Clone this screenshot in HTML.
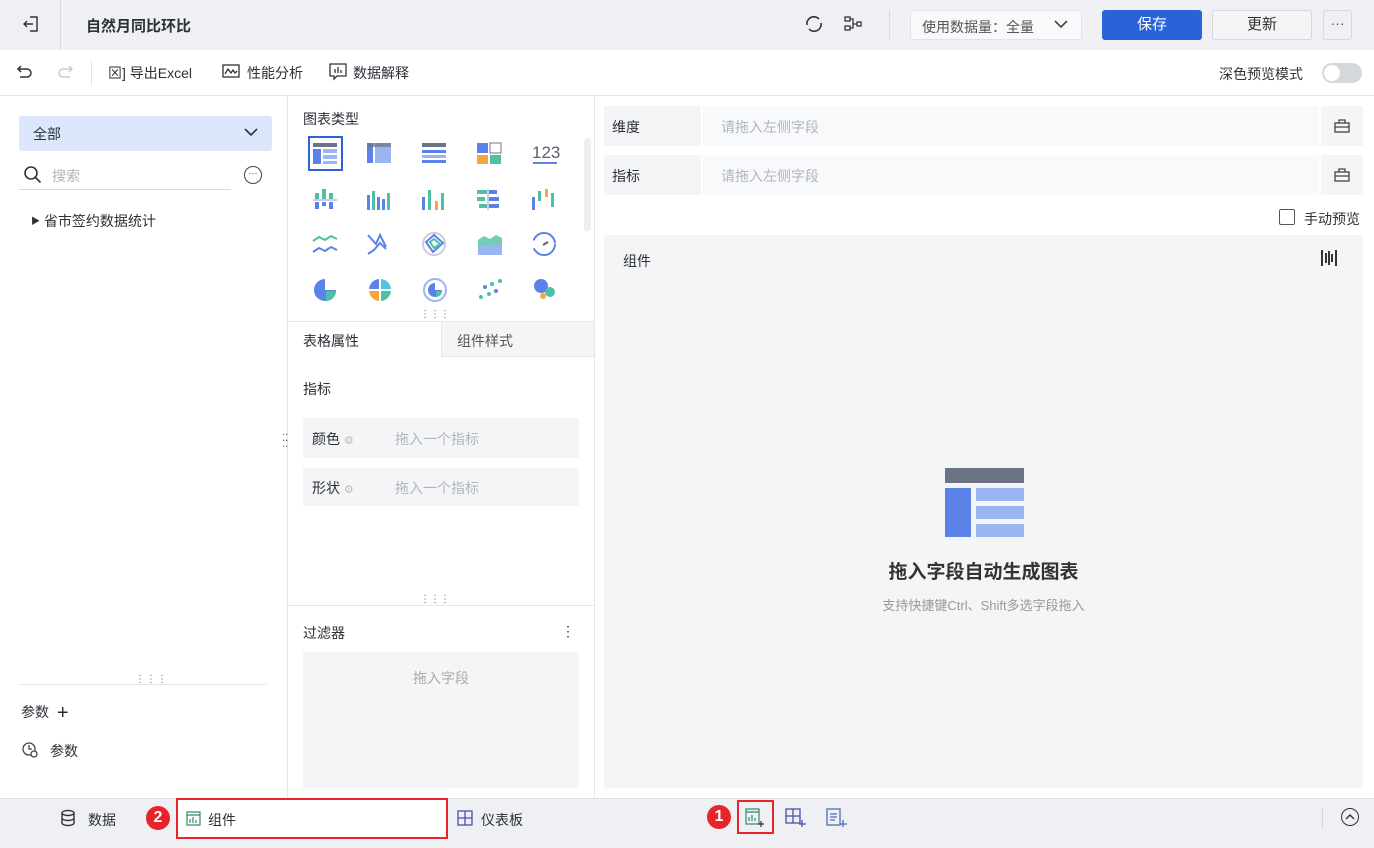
<!DOCTYPE html>
<html><head><meta charset="utf-8"><style>
*{box-sizing:border-box;margin:0;padding:0}
body{width:1374px;height:848px;overflow:hidden;font-family:"Liberation Sans","Noto Sans CJK SC",sans-serif;color:#2b2f36;background:#fff;position:relative;font-size:14px}
.a{position:absolute}
.g{color:#b0b5bd}
</style></head><body>
<div class="a" style="left:0;top:0;width:1374px;height:50px;background:#eef0f4"></div>
<div class="a" style="left:60px;top:0;width:1px;height:50px;background:#d8dbe0"></div>
<svg class="a" style="left:22px;top:14px" width="18" height="20" viewBox="0 0 18 20" fill="none" stroke="#333" stroke-width="1.4"><path d="M8 3h7v14H8M2 10h9M5 7l-3 3 3 3"/></svg>
<div class="a" style="left:86px;top:15px;font-size:15px;font-weight:bold">自然月同比环比</div>
<svg class="a" style="left:804px;top:14px" width="20" height="20" viewBox="0 0 20 20" fill="none" stroke="#333" stroke-width="1.6"><path d="M4 6a7 7 0 0 1 11-1M16 14a7 7 0 0 1-11 1M3 11a7 7 0 0 1 1-5M17 9a7 7 0 0 1-1 5"/></svg>
<svg class="a" style="left:843px;top:15px" width="20" height="18" viewBox="0 0 20 18" fill="none" stroke="#333" stroke-width="1.3"><rect x="2" y="2" width="5" height="4"/><rect x="2" y="11" width="5" height="4"/><rect x="14" y="7" width="4" height="4"/><path d="M7 4h3v9H7M10 9h4"/></svg>
<div class="a" style="left:889px;top:10px;width:1px;height:30px;background:#d8dbe0"></div>
<div class="a" style="left:910px;top:10px;width:172px;height:30px;background:#f8f9fb;border:1px solid #dfe2e6;border-radius:3px;font-size:14px;color:#555;padding:6px 0 0 11px">使用数据量：全量</div>
<svg class="a" style="left:1053px;top:18px" width="16" height="12" viewBox="0 0 16 12" fill="none" stroke="#444" stroke-width="1.6"><path d="M2 3l6 6 6-6"/></svg>
<div class="a" style="left:1102px;top:10px;width:100px;height:30px;background:#2962d9;border-radius:3px;color:#fff;text-align:center;line-height:30px;font-size:15px">保存</div>
<div class="a" style="left:1212px;top:10px;width:100px;height:30px;background:#f4f5f7;border:1px solid #d5d8dd;border-radius:3px;text-align:center;line-height:28px;font-size:15px;color:#333">更新</div>
<div class="a" style="left:1323px;top:10px;width:29px;height:30px;border:1px solid #d5d8dd;border-radius:3px;text-align:center;line-height:24px;color:#555">···</div>
<div class="a" style="left:0;top:95px;width:1374px;height:1px;background:#e4e6ea"></div>
<svg class="a" style="left:16px;top:64px" width="18" height="16" viewBox="0 0 18 16" fill="none" stroke="#333" stroke-width="1.5"><path d="M5 2L2 5l3 3M2 5h9a4 4 0 0 1 0 8H4"/></svg>
<svg class="a" style="left:56px;top:64px" width="18" height="16" viewBox="0 0 18 16" fill="none" stroke="#ccc" stroke-width="1.5"><path d="M13 2l3 3-3 3M16 5H7a4 4 0 0 0 0 8h7"/></svg>
<div class="a" style="left:91px;top:60px;width:1px;height:26px;background:#e4e6ea"></div>
<div class="a" style="left:108px;top:63px;font-size:14px">⊠] 导出Excel</div>
<svg class="a" style="left:222px;top:64px" width="18" height="16" viewBox="0 0 18 16" fill="none" stroke="#333" stroke-width="1.3"><rect x="1" y="1" width="16" height="12"/><path d="M3 10l3-5 3 4 2-3 2 3 2-2"/></svg>
<div class="a" style="left:247px;top:63px;font-size:14px">性能分析</div>
<svg class="a" style="left:329px;top:63px" width="18" height="18" viewBox="0 0 18 18" fill="none" stroke="#333" stroke-width="1.3"><path d="M1 1h16v12H8l-3 3v-3H1z"/><path d="M6 10V6M9 10V4M12 10V7"/></svg>
<div class="a" style="left:353px;top:63px;font-size:14px">数据解释</div>
<div class="a" style="left:1219px;top:64px;font-size:14px;color:#333">深色预览模式</div>
<div class="a" style="left:1322px;top:63px;width:40px;height:20px;border-radius:10px;background:#d4d7dc"><div style="margin:2px;width:16px;height:16px;border-radius:8px;background:#fff"></div></div>
<div class="a" style="left:287px;top:96px;width:1px;height:702px;background:#e4e6ea"></div>
<div class="a" style="left:19px;top:116px;width:253px;height:35px;background:#dde7fb;border-radius:3px;padding:8px 0 0 14px;font-size:14px">全部</div>
<svg class="a" style="left:243px;top:126px" width="16" height="12" viewBox="0 0 16 12" fill="none" stroke="#333" stroke-width="1.6"><path d="M2 3l6 6 6-6"/></svg>
<svg class="a" style="left:23px;top:165px" width="20" height="20" viewBox="0 0 20 20" fill="none" stroke="#333" stroke-width="1.6"><circle cx="8" cy="8" r="6"/><path d="M12.5 12.5l5 5"/></svg>
<div class="a g" style="left:52px;top:166px;font-size:14px">搜索</div>
<div class="a" style="left:19px;top:189px;width:212px;height:1px;background:#d8dbe0"></div>
<div class="a" style="left:244px;top:166px;width:18px;height:18px;border:1.4px solid #444;border-radius:50%;font-size:9px;text-align:center;line-height:12px">···</div>
<div class="a" style="left:31px;top:211px;font-size:14px"><span style="font-size:9px;vertical-align:2px">▶</span> 省市签约数据统计</div>
<div class="a" style="left:20px;top:684px;width:247px;height:1px;background:#e4e6ea"></div>
<div class="a" style="left:135px;top:674px;font-size:10px;color:#666;letter-spacing:1px">⋮⋮⋮</div>
<div class="a" style="left:21px;top:702px;font-size:14px">参数 <span style="font-size:20px;vertical-align:-2px;margin-left:4px">+</span></div>
<svg class="a" style="left:21px;top:741px" width="18" height="18" viewBox="0 0 18 18" fill="none" stroke="#444" stroke-width="1.3"><circle cx="8" cy="8" r="6"/><path d="M8 4v4h3"/><circle cx="13" cy="13" r="3" fill="#fff"/></svg>
<div class="a" style="left:50px;top:741px;font-size:14px">参数</div>
<div class="a" style="left:594px;top:96px;width:1px;height:702px;background:#e4e6ea"></div>
<div class="a" style="left:303px;top:109px;font-size:14px">图表类型</div>
<div class="a" style="left:584px;top:138px;width:7px;height:93px;background:#eceef1;border-radius:4px"></div>
<div class="a" style="left:308px;top:136px;width:35px;height:35px;border:2px solid #2962d9"></div>
<svg class="a" style="left:300px;top:136px" width="280" height="170" viewBox="0 0 280 170">
<g transform="translate(13,7)"><rect width="24" height="4" fill="#6b7385"/><rect y="6" width="8" height="15" fill="#5b82e8"/><rect x="10" y="6" width="14" height="4" fill="#9bb5f3"/><rect x="10" y="12" width="14" height="4" fill="#9bb5f3"/><rect x="10" y="18" width="14" height="3" fill="#9bb5f3"/></g>
<g transform="translate(67,7)"><rect width="6" height="20" fill="#5b82e8"/><rect x="8" width="16" height="20" fill="#9bb5f3"/><rect width="24" height="4" fill="#6b7385" opacity=".7"/></g>
<g transform="translate(122,7)"><rect width="24" height="4" fill="#6b7385"/><rect y="7" width="24" height="3" fill="#5b82e8"/><rect y="12" width="24" height="3" fill="#9bb5f3"/><rect y="17" width="24" height="3" fill="#5b82e8"/></g>
<g transform="translate(177,7)"><rect width="11" height="10" fill="#5b82e8"/><rect x="13" width="11" height="10" fill="none" stroke="#6b7385"/><rect y="12" width="11" height="9" fill="#f5a83a"/><rect x="13" y="12" width="11" height="9" fill="#4fbfa5"/></g>
<text x="232" y="22" font-size="17" fill="#5a6170" font-family="Liberation Sans">123</text><rect x="233" y="26" width="24" height="2" fill="#5b82e8"/>
<g transform="translate(13,53)"><rect x="2" y="4" width="4" height="6" fill="#4fbfa5"/><rect x="9" y="0" width="4" height="10" fill="#4fbfa5"/><rect x="16" y="4" width="4" height="6" fill="#4fbfa5"/><rect y="10" width="24" height="2" fill="#ccd"/><rect x="2" y="13" width="4" height="7" fill="#5b82e8"/><rect x="9" y="13" width="4" height="4" fill="#5b82e8"/><rect x="16" y="13" width="4" height="7" fill="#5b82e8"/></g>
<g transform="translate(67,53)"><rect x="0" y="6" width="3" height="15" fill="#5b82e8"/><rect x="5" y="2" width="3" height="19" fill="#4fbfa5"/><rect x="10" y="8" width="3" height="13" fill="#5b82e8"/><rect x="15" y="10" width="3" height="11" fill="#5b82e8"/><rect x="20" y="4" width="3" height="17" fill="#4fbfa5"/></g>
<g transform="translate(122,53)"><rect x="0" y="8" width="3" height="13" fill="#5b82e8"/><rect x="6" y="1" width="3" height="20" fill="#4fbfa5"/><rect x="13" y="12" width="3" height="9" fill="#f5a83a"/><rect x="19" y="4" width="3" height="17" fill="#4fbfa5"/></g>
<g transform="translate(177,53)"><rect x="0" y="1" width="10" height="4" fill="#4fbfa5"/><rect x="12" y="1" width="8" height="4" fill="#5b82e8"/><rect x="0" y="8" width="8" height="4" fill="#4fbfa5"/><rect x="12" y="8" width="10" height="4" fill="#5b82e8"/><rect x="2" y="15" width="8" height="4" fill="#4fbfa5"/><rect x="12" y="15" width="10" height="4" fill="#5b82e8"/><rect x="10" width="2" height="21" fill="#ccd"/></g>
<g transform="translate(232,53)"><rect x="0" y="8" width="3" height="13" fill="#5b82e8"/><rect x="6" y="2" width="3" height="10" fill="#4fbfa5"/><rect x="13" y="0" width="3" height="8" fill="#f5a83a"/><rect x="19" y="4" width="3" height="14" fill="#4fbfa5"/></g>
<g fill="none" stroke-width="2"><path d="M13 105l6-4 6 3 6-4 6 3" stroke="#4fbfa5"/><path d="M13 116l6-4 6 3 6-4 6 3" stroke="#5b82e8"/><path d="M68 99l8 9 4-9 6 12M68 118l6-4 6-7 6 6" stroke="#5b82e8"/><circle cx="134" cy="108" r="11" stroke="#ccd"/><path d="M126 106l8-7 9 8-10 9z" stroke="#5b82e8"/><path d="M130 106l4-3 6 5-6 4z" stroke="#4fbfa5"/><circle cx="244" cy="108" r="11" stroke="#5b82e8" stroke-dasharray="30 8"/><path d="M243 109l5-3" stroke="#5a6170"/></g>
<path d="M178 104l6-4 6 3 6-4 6 3v16h-24z" fill="#4fbfa5" opacity=".8"/><path d="M178 112l6-3 6 2 6-3 6 3v8h-24z" fill="#9bb5f3"/>
<g transform="translate(25,154)"><path d="M0 0V-11A11 11 0 1 0 11 0z" fill="#5b82e8"/><path d="M1 1h10a10 10 0 0 1-10 10z" fill="#4fbfa5"/></g>
<g transform="translate(80,154)"><path d="M-1-1V-11A11 11 0 0 0-11-1z" fill="#5b82e8"/><path d="M1-1V-11A11 11 0 0 1 11-1z" fill="#4fc3e8"/><path d="M-1 1H-11A11 11 0 0 0-1 11z" fill="#f5a83a"/><path d="M1 1H11A11 11 0 0 1 1 11z" fill="#4fbfa5"/></g>
<g transform="translate(135,154)"><circle r="11" fill="none" stroke="#9bb5f3" stroke-width="2"/><path d="M0 0V-7A7 7 0 1 0 7 0z" fill="#5b82e8"/><path d="M1 1h6a6 6 0 0 1-6 6z" fill="#4fbfa5"/></g>
<g fill="#5b82e8"><circle cx="181" cy="161" r="2" fill="#4fbfa5"/><circle cx="185" cy="151" r="2"/><circle cx="189" cy="158" r="2" fill="#4fbfa5"/><circle cx="192" cy="148" r="2" fill="#4fbfa5"/><circle cx="196" cy="155" r="2"/><circle cx="200" cy="145" r="2" fill="#4fbfa5"/></g>
<circle cx="241" cy="150" r="7" fill="#5b82e8"/><circle cx="250" cy="156" r="5" fill="#4fbfa5"/><circle cx="243" cy="160" r="3" fill="#f5a83a"/>
</svg>
<div class="a" style="left:420px;top:309px;font-size:10px;color:#666">⋮⋮⋮</div>
<div class="a" style="left:288px;top:321px;width:306px;height:1px;background:#e4e6ea"></div>
<div class="a" style="left:441px;top:322px;width:153px;height:35px;background:#f4f5f7;border-left:1px solid #e4e6ea;border-bottom:1px solid #e4e6ea"></div>
<div class="a" style="left:303px;top:331px;font-size:14px">表格属性</div>
<div class="a" style="left:457px;top:331px;font-size:14px;color:#555">组件样式</div>
<div class="a" style="left:303px;top:379px;font-size:14px">指标</div>
<div class="a" style="left:303px;top:418px;width:276px;height:40px;background:#f4f5f7"></div>
<div class="a" style="left:312px;top:429px;font-size:14px">颜色 <span style="color:#bbb;font-size:11px">⚙</span></div>
<div class="a g" style="left:395px;top:429px;font-size:14px">拖入一个指标</div>
<div class="a" style="left:303px;top:468px;width:276px;height:38px;background:#f4f5f7"></div>
<div class="a" style="left:312px;top:478px;font-size:14px">形状 <span style="color:#bbb;font-size:11px">⚙</span></div>
<div class="a g" style="left:395px;top:478px;font-size:14px">拖入一个指标</div>
<div class="a" style="left:282px;top:436px;font-size:10px;color:#666;line-height:6px">⁚⁚<br>⁚⁚</div>
<div class="a" style="left:288px;top:605px;width:306px;height:1px;background:#e4e6ea"></div>
<div class="a" style="left:420px;top:594px;font-size:10px;color:#666">⋮⋮⋮</div>
<div class="a" style="left:303px;top:623px;font-size:14px">过滤器</div>
<div class="a" style="left:561px;top:623px;font-size:14px">⋮</div>
<div class="a" style="left:303px;top:652px;width:276px;height:136px;background:#f4f5f7;text-align:center;padding-top:16px;color:#aaa;font-size:14px">拖入字段</div>
<div class="a" style="left:604px;top:106px;width:759px;height:40px;background:#f4f5f7"></div>
<div class="a" style="left:701px;top:106px;width:620px;height:40px;background:#f8f9fa;border-left:2px solid #fff;border-right:2px solid #fff"></div>
<div class="a" style="left:612px;top:117px;font-size:14px">维度</div>
<div class="a g" style="left:721px;top:117px;font-size:14px">请拖入左侧字段</div>
<div class="a" style="left:604px;top:155px;width:759px;height:40px;background:#f4f5f7"></div>
<div class="a" style="left:701px;top:155px;width:620px;height:40px;background:#f8f9fa;border-left:2px solid #fff;border-right:2px solid #fff"></div>
<div class="a" style="left:612px;top:166px;font-size:14px">指标</div>
<div class="a g" style="left:721px;top:166px;font-size:14px">请拖入左侧字段</div>
<svg class="a" style="left:1333px;top:117px" width="18" height="18" viewBox="0 0 18 18" fill="none" stroke="#444" stroke-width="1.3"><rect x="2" y="6" width="14" height="9"/><path d="M6 6V3h6v3M2 10h14"/></svg>
<svg class="a" style="left:1333px;top:166px" width="18" height="18" viewBox="0 0 18 18" fill="none" stroke="#444" stroke-width="1.3"><rect x="2" y="6" width="14" height="9"/><path d="M6 6V3h6v3M2 10h14"/></svg>
<div class="a" style="left:1279px;top:209px;width:16px;height:16px;border:1.3px solid #555;border-radius:2px"></div>
<div class="a" style="left:1304px;top:209px;font-size:14px">手动预览</div>
<div class="a" style="left:604px;top:235px;width:759px;height:553px;background:#f4f5f7"></div>
<div class="a" style="left:623px;top:251px;font-size:14px">组件</div>
<svg class="a" style="left:1320px;top:249px" width="18" height="18" viewBox="0 0 18 18" fill="#333"><rect x="1" y="1" width="2" height="16"/><rect x="15" y="1" width="2" height="16"/><rect x="5" y="4" width="2" height="10"/><rect x="8" y="2" width="2" height="14"/><rect x="11" y="5" width="2" height="8"/></svg>
<svg class="a" style="left:945px;top:468px" width="79" height="69" viewBox="0 0 79 69"><rect width="79" height="15" fill="#6b7385"/><rect y="20" width="26" height="49" fill="#5b82e8"/><rect x="31" y="20" width="48" height="13" fill="#9bb5f3"/><rect x="31" y="38" width="48" height="13" fill="#9bb5f3"/><rect x="31" y="56" width="48" height="13" fill="#9bb5f3"/></svg>
<div class="a" style="left:604px;top:557px;width:759px;text-align:center;font-size:19px;font-weight:bold;color:#333">拖入字段自动生成图表</div>
<div class="a" style="left:604px;top:595px;width:759px;text-align:center;font-size:13px;color:#999">支持快捷键Ctrl、Shift多选字段拖入</div>
<div class="a" style="left:0;top:798px;width:1374px;height:50px;background:#eef0f4;border-top:1px solid #dcdfe4"></div>
<svg class="a" style="left:59px;top:809px" width="18" height="18" viewBox="0 0 18 18" fill="none" stroke="#333" stroke-width="1.4"><ellipse cx="9" cy="4" rx="6" ry="2.5"/><path d="M3 4v10c0 1.4 2.7 2.5 6 2.5s6-1.1 6-2.5V4M3 9c0 1.4 2.7 2.5 6 2.5S15 10.4 15 9"/></svg>
<div class="a" style="left:88px;top:810px;font-size:14px">数据</div>
<div class="a" style="left:146px;top:806px;width:24px;height:24px;border-radius:12px;background:#e8232a;color:#fff;font-weight:bold;text-align:center;line-height:24px;font-size:16px">2</div>
<div class="a" style="left:176px;top:798px;width:272px;height:41px;background:#fff;border:2px solid #e8232a"></div>
<svg class="a" style="left:186px;top:811px" width="15" height="15" viewBox="0 0 15 15" fill="none" stroke="#2d8a6e" stroke-width="1.2"><rect x="1" y="1" width="13" height="13"/><path d="M1 4h13M4 12V8M7 12V6M10 12V9"/></svg>
<div class="a" style="left:208px;top:810px;font-size:14px">组件</div>
<svg class="a" style="left:457px;top:810px" width="16" height="16" viewBox="0 0 16 16" fill="none" stroke="#4b4fa8" stroke-width="1.3"><rect x="1" y="1" width="14" height="14"/><path d="M8 1v14M1 8h14"/></svg>
<div class="a" style="left:481px;top:810px;font-size:14px">仪表板</div>
<div class="a" style="left:707px;top:805px;width:24px;height:24px;border-radius:12px;background:#e8232a;color:#fff;font-weight:bold;text-align:center;line-height:24px;font-size:16px">1</div>
<div class="a" style="left:737px;top:800px;width:37px;height:34px;border:2px solid #e8232a"></div>
<svg class="a" style="left:745px;top:808px" width="20" height="20" viewBox="0 0 20 20" fill="none" stroke="#2d8a6e" stroke-width="1.2"><rect x="1" y="1" width="13" height="15"/><path d="M1 4h13M4 13V9M7 13V7M10 13V10"/><path d="M16 13v6M13 16h6" stroke="#333"/></svg>
<svg class="a" style="left:785px;top:808px" width="22" height="20" viewBox="0 0 22 20" fill="none" stroke="#4b4fa8" stroke-width="1.3"><rect x="1" y="1" width="14" height="14"/><path d="M8 1v14M1 8h14M17 12v7M14 16h7"/></svg>
<svg class="a" style="left:826px;top:808px" width="22" height="20" viewBox="0 0 22 20" fill="none" stroke="#4b6fb8" stroke-width="1.3"><rect x="1" y="1" width="13" height="16"/><path d="M4 6h7M4 9h7M4 12h5M17 12v7M14 16h7"/></svg>
<div class="a" style="left:1322px;top:808px;width:1px;height:20px;background:#d0d3d8"></div>
<div class="a" style="left:1341px;top:808px;width:18px;height:18px;border:1.4px solid #333;border-radius:50%"></div>
<svg class="a" style="left:1345px;top:813px" width="10" height="8" viewBox="0 0 10 8" fill="none" stroke="#333" stroke-width="1.4"><path d="M1 6l4-4 4 4"/></svg>
</body></html>
